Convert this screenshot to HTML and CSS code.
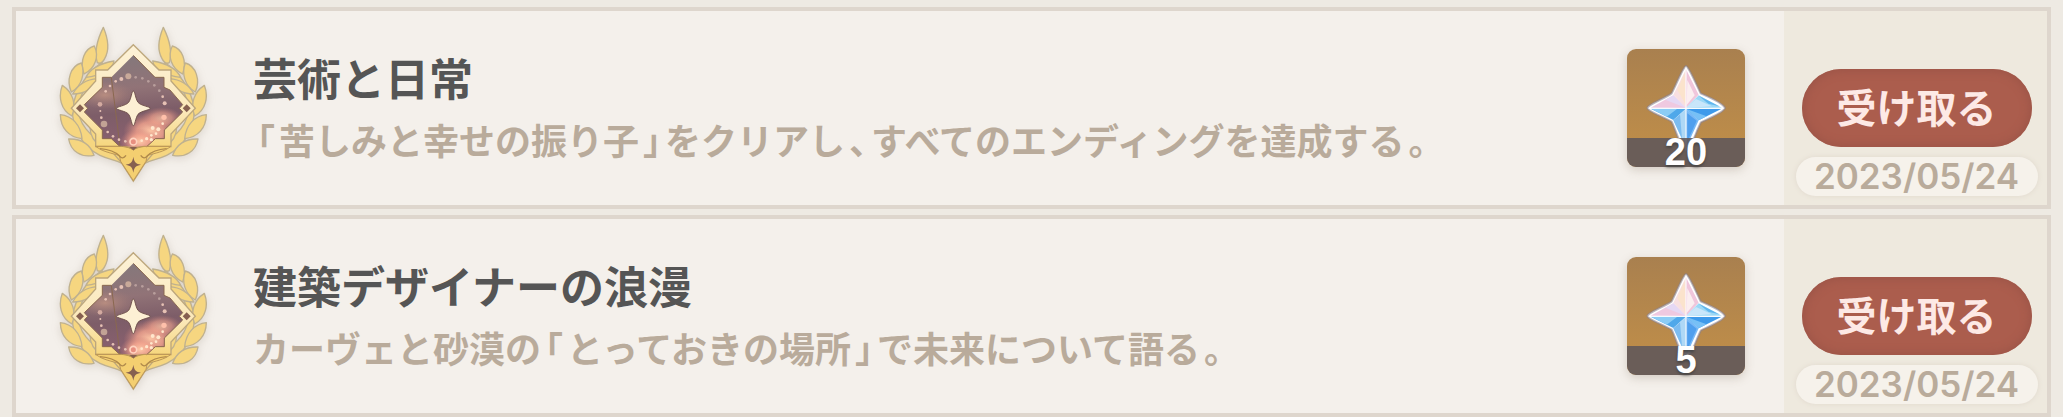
FILE: index.html
```html
<!doctype html>
<html lang="ja">
<head>
  <meta charset="UTF-8">
  <meta name="viewport" content="width=device-width, initial-scale=1.0">
  <title>アチーブメント</title>
  <link rel="stylesheet" href="styles.css">
</head>
<body>
<svg class="defs" aria-hidden="true">
  <defs>
    <linearGradient id="gold" x1="0" y1="0" x2="0" y2="1">
      <stop offset="0" stop-color="#fdf2d8"/>
      <stop offset="0.5" stop-color="#fbe8b8"/>
      <stop offset="0.75" stop-color="#f6d67c"/>
      <stop offset="1" stop-color="#f4cf70"/>
    </linearGradient>
    <linearGradient id="sky" x1="0" y1="0" x2="0.1" y2="1">
      <stop offset="0" stop-color="#82797c"/>
      <stop offset="0.4" stop-color="#917377"/>
      <stop offset="0.65" stop-color="#7d5d68"/>
      <stop offset="1" stop-color="#8b6070"/>
    </linearGradient>
    <radialGradient id="glow">
      <stop offset="0" stop-color="#ffc9a8"/>
      <stop offset="0.5" stop-color="#f3a48e" stop-opacity="0.8"/>
      <stop offset="1" stop-color="#c98078" stop-opacity="0"/>
    </radialGradient>
    <radialGradient id="dusk">
      <stop offset="0" stop-color="#c29483" stop-opacity="0.8"/>
      <stop offset="1" stop-color="#a98078" stop-opacity="0"/>
    </radialGradient>
    <clipPath id="window">
      <path d="M280 136L345 202H372V232L390 240L428 284L418 295L428 306L373 360V386H346L320 410H240L214 386H187V360L133 306L143 295L133 284L187 232V202H214Z"/>
    </clipPath>
  </defs>

  <symbol id="emblem" viewBox="0 33 540 522">
    <g id="laurel" fill="#f6d680" stroke="#bfb18f" stroke-width="4" stroke-linejoin="round">
      <path d="M186 158C150 180 105 235 98 295C94 355 130 412 180 436C215 452 240 452 262 470L285 440L200 405C150 380 112 340 116 290C120 245 150 205 205 190Z"/>
      <path d="M190 52C176 80 160 118 172 158C180 162 188 158 194 146C208 122 208 95 190 52Z"/>
      <path d="M163 108C134 116 118 152 132 192C166 176 178 138 163 108Z"/>
      <path d="M124 159C92 168 78 210 94 246C126 228 136 190 124 159Z"/>
      <path d="M67 226C54 260 62 300 96 318C110 282 98 246 67 226Z"/>
      <path d="M61 314C62 354 86 382 126 386C122 344 96 318 61 314Z"/>
      <path d="M86 387C92 424 124 444 162 436C150 402 122 386 86 387Z"/>
      <path d="M138 202C152 172 182 160 222 153C218 178 180 198 138 202Z"/>
      <path d="M98 252C115 222 140 208 172 206C165 232 135 252 98 252Z"/>
      <path d="M150 350C150 375 160 395 185 410C190 385 180 365 150 350Z"/>
    </g>
    <use href="#laurel" transform="matrix(-1 0 0 1 560 0)"/>
    <path fill="url(#gold)" stroke="#bda77c" stroke-width="4" stroke-linejoin="miter" d="M280 104L357 180H393V213L466 295L393 372V410H357L316 458L280 514L244 458L203 410H167V372L94 295L167 213V180H203Z"/>
    <path fill="#f4cf70" stroke="#bd9858" stroke-width="3" d="M167 409H245C260 411 272 414 280 420C288 414 300 411 315 409H393C373 425 345 430 322 436L318 454L280 512L242 454L238 436C215 430 187 425 167 409Z"/>
    <g clip-path="url(#window)">
      <rect x="130" y="130" width="300" height="290" fill="url(#sky)"/>
      <ellipse cx="195" cy="255" rx="90" ry="42" fill="url(#dusk)"/>
      <ellipse cx="330" cy="365" rx="80" ry="58" fill="url(#glow)"/>
      <ellipse cx="300" cy="395" rx="60" ry="40" fill="url(#glow)"/>
      <ellipse cx="365" cy="325" rx="60" ry="34" fill="url(#glow)" opacity="0.7"/>
    </g>
    <path fill="none" stroke="#8a6850" stroke-width="3" d="M280 136L345 202H372V232L390 240L428 284L418 295L428 306L373 360V386H346L320 410M240 410L214 386H187V360L133 306L143 295L133 284L187 232V202H214Z"/>
    <path fill="none" stroke="#bd9858" stroke-width="3" d="M167 409H248C262 410 272 413 280 420C288 413 298 410 312 409H393"/>
    <path fill="none" stroke="#b08a4c" stroke-width="4" d="M180 416C205 418 225 424 238 438Q248 450 258 436M380 416C355 418 335 424 322 438Q312 450 302 436"/>
    <g fill="#866050">
      <path d="M120 283L132 295L120 307L108 295Z"/>
      <path d="M440 283L452 295L440 307L428 295Z"/>
      <path d="M280 440C283 457 287 461 303 464C287 467 283 471 280 488C277 471 273 467 257 464C273 461 277 457 280 440Z"/>
      <path d="M268 411H292L280 421Z"/>
    </g>
    <path fill="#fdf0d4" stroke="#71524e" stroke-width="3" d="M280 243C285 243 286 265 294 277C302 287 331 290 331 295C331 300 302 303 294 313C286 325 285 347 280 347C275 347 274 325 266 313C258 303 229 300 229 295C229 290 258 287 266 277C274 265 275 243 280 243Z"/>
    <g fill="#e6c1b4">
      <circle cx="265" cy="199" r="9" fill="#c8a999"/>
      <circle cx="244" cy="207" r="6"/>
      <circle cx="227" cy="214" r="4"/>
      <circle cx="210" cy="228" r="4"/>
      <circle cx="197" cy="244" r="4"/>
      <circle cx="180" cy="283" r="7" fill="#d3aaa0"/>
      <circle cx="181" cy="303" r="3"/>
      <circle cx="184" cy="323" r="4"/>
      <circle cx="192" cy="342" r="10" fill="#c2a395"/>
      <circle cx="203" cy="366" r="4"/>
      <circle cx="219" cy="379" r="4"/>
      <circle cx="237" cy="389" r="4"/>
      <circle cx="256" cy="394" r="4"/>
      <circle cx="287" cy="202" r="4" fill="#b89e9c"/>
      <circle cx="307" cy="205" r="4" fill="#b89e9c"/>
      <circle cx="325" cy="214" r="4" fill="#b89e9c"/>
      <circle cx="343" cy="226" r="4" fill="#b89e9c"/>
      <circle cx="358" cy="242" r="4" fill="#b89e9c"/>
      <circle cx="368" cy="260" r="4"/>
      <circle cx="374" cy="280" r="6"/>
      <circle cx="372" cy="322" r="8" fill="#ffc0aa"/>
    </g>
    <g fill="#ffe6cc">
      <circle cx="368" cy="341" r="4"/>
      <circle cx="338" cy="354" r="6"/>
      <circle cx="355" cy="358" r="6"/>
      <circle cx="348" cy="371" r="4"/>
      <circle cx="334" cy="376" r="4"/>
      <circle cx="334" cy="389" r="5"/>
      <circle cx="320" cy="386" r="5"/>
      <circle cx="305" cy="392" r="4"/>
    </g>
    <circle cx="280" cy="395" r="10" fill="#e88f80" stroke="#ffd3bf" stroke-width="5"/>
  </symbol>

  <symbol id="primogem" viewBox="81 57 354 354">
    <path fill="#fff" stroke="#8b8290" stroke-opacity="0.6" stroke-width="6" stroke-linejoin="round" d="M258 108C266 110 290 165 302 190C325 200 370 220 375 234C370 248 325 266 303 277C290 300 272 360 258 364C244 360 228 300 215 275C195 262 146 246 142 234C146 222 195 205 215 190C228 165 250 110 258 108Z"/>
    <path fill="#f8dfe0" d="M258 118L220 194L258 234Z"/>
    <path fill="#fbe3cc" d="M254 128L232 180L258 226Z"/>
    <path fill="#f0c6dc" d="M258 118L296 194L258 234Z"/>
    <path fill="#fbeef0" d="M262 150L284 196L260 225Z"/>
    <path fill="#efc9e0" d="M152 233L220 196L258 234Z"/>
    <path fill="#e5d8f4" d="M196 209L220 196L258 234Z"/>
    <path fill="#9bd8f6" d="M296 196L365 233L258 234Z"/>
    <path fill="#c9e6fa" d="M288 207L336 229L258 234Z"/>
    <path fill="#61b6ee" d="M296 197L358 229L325 221Z"/>
    <path fill="#4fa8ea" d="M152 236L220 270L258 236Z"/>
    <path fill="#8bccf5" d="M152 236L200 260L232 236Z"/>
    <path fill="#3e9aeb" d="M365 236L296 271L258 236Z"/>
    <path fill="#77c0f6" d="M258 236L296 271L320 259Z"/>
    <path fill="#aed8f6" d="M258 236L220 271L258 354Z"/>
    <path fill="#7cbcf0" d="M240 253L220 271L246 326Z"/>
    <path fill="#78b9f6" d="M258 236L296 271L258 354Z"/>
    <path fill="#4f9fee" d="M262 250L290 272L262 335Z"/>
    <path fill="none" stroke="#fff" stroke-width="3" d="M258 112V355M146 235H370"/>
  </symbol>
</svg>

<main class="list">
  <article class="card">
    <svg class="emblem" role="img" aria-label="勲章"><use href="#emblem"/></svg>
    <div class="info">
      <h2>芸術と日常</h2>
      <p><span class="punct">「</span>苦しみと幸せの振り子<span class="punct">」</span>をクリアし<span class="punct">、</span>すべてのエンディングを達成する<span class="punct">。</span></p>
    </div>
    <div class="reward">
      <svg role="img" aria-label="原石"><use href="#primogem"/></svg>
      <span class="count">20</span>
    </div>
    <div class="action">
      <button type="button">受け取る</button>
      <time datetime="2023-05-24">2023/05/24</time>
    </div>
  </article>

  <article class="card">
    <svg class="emblem" role="img" aria-label="勲章"><use href="#emblem"/></svg>
    <div class="info">
      <h2>建築デザイナーの浪漫</h2>
      <p>カーヴェと砂漠の<span class="punct">「</span>とっておきの場所<span class="punct">」</span>で未来について語る<span class="punct">。</span></p>
    </div>
    <div class="reward">
      <svg role="img" aria-label="原石"><use href="#primogem"/></svg>
      <span class="count">5</span>
    </div>
    <div class="action">
      <button type="button">受け取る</button>
      <time datetime="2023-05-24">2023/05/24</time>
    </div>
  </article>
</main>
</body>
</html>
```

FILE: styles.css
```css
* {
  margin: 0;
  padding: 0;
  box-sizing: border-box;
}

body {
  background: #eeeae3;
  font-family: "Noto Sans CJK JP", sans-serif;
  font-weight: 700;
}

.defs {
  position: absolute;
  width: 0;
  height: 0;
}

.list {
  display: flex;
  flex-direction: column;
  gap: 6px;
  padding: 7px 12px 0;
}

.card {
  display: flex;
  align-items: center;
  border: 4px solid #ded6cd;
  background: #f4f0eb;
}

.emblem {
  flex: none;
  width: 180px;
  height: 174px;
  margin: 10px 33px 10px 24px;
  filter: drop-shadow(0 2px 4px rgba(120, 100, 80, 0.2));
}

.info {
  flex: 1;
  min-width: 0;
  white-space: nowrap;
}

.info h2 {
  padding-bottom: 3px;
  font-size: 44px;
  line-height: 58px;
  color: #555;
}

.info p {
  font-size: 36px;
  line-height: 60px;
  color: #b9ab9b;
}

/* 約物は半角幅に詰める */
.punct {
  font-feature-settings: "halt";
  margin: 0 4px;
}

.reward {
  position: relative;
  flex: none;
  width: 118px;
  height: 118px;
  margin-right: 39px;
  border-radius: 9px;
  background: linear-gradient(#a9804f, #bb8b4a 70%, #bf8d48);
  box-shadow: 0 3px 10px rgba(120, 100, 80, 0.25);
}

.reward svg {
  display: block;
  width: 100%;
  height: 100%;
}

.count {
  position: absolute;
  left: 0;
  right: 0;
  bottom: 0;
  border-radius: 0 0 9px 9px;
  background: rgba(94, 87, 90, 0.88);
  color: #fff;
  font: 700 38px/29px "Liberation Sans", sans-serif;
  text-align: center;
  text-shadow: 0 2px 3px #444;
}

.action {
  flex: none;
  align-self: stretch;
  display: flex;
  flex-direction: column;
  align-items: center;
  justify-content: flex-end;
  gap: 10px;
  width: 263px;
  padding: 0 0 9px 2px;
  background: #eee9de;
}

.action button {
  width: 230px;
  height: 78px;
  padding-bottom: 4px;
  border: 0;
  border-radius: 39px;
  background: #ab5d4d;
  box-shadow: inset 0 0 8px 2px #9c5548;
  color: #fde9e5;
  font: inherit;
  font-size: 40px;
}

.action time {
  width: 242px;
  border-radius: 20px;
  background: #f6f2eb;
  box-shadow: 0 0 4px 1px #e4ddd2;
  color: #b9ab9b;
  font: 600 35px/39px Inter, sans-serif;
  text-align: center;
}
```
